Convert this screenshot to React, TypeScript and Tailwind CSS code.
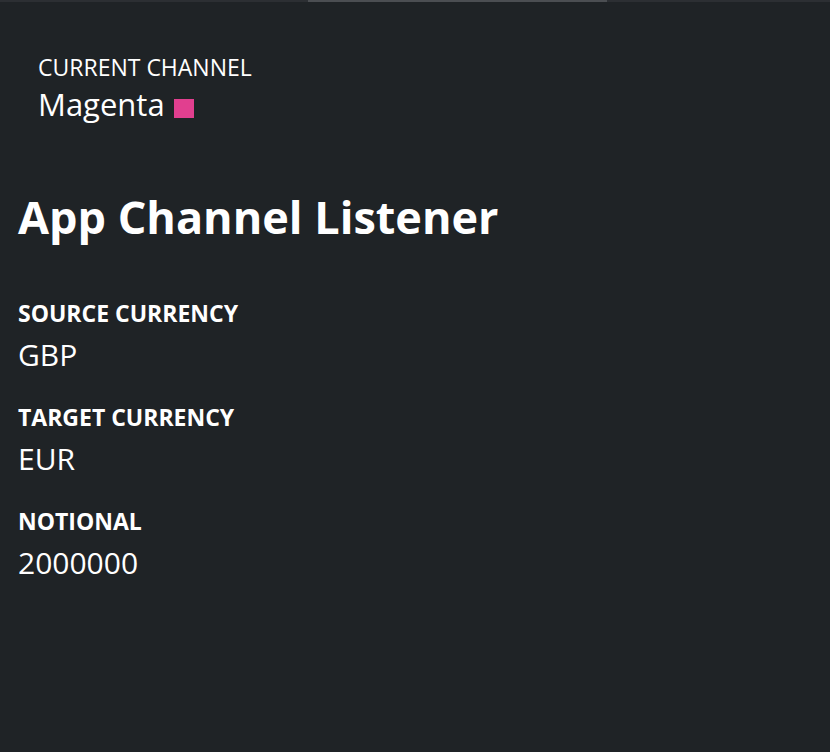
export default function App() {
  const fields = [
    { label: "SOURCE CURRENCY", value: "GBP" },
    { label: "TARGET CURRENCY", value: "EUR" },
    { label: "NOTIONAL", value: "2000000" },
  ];

  return (
    <div className="min-h-[752px] w-full bg-[#1f2326] text-white font-['Open_Sans',sans-serif]">
      {/* top scroll strip */}
      <div className="h-[2px] w-full bg-[#2c2f33]">
        <div className="ml-[308px] h-full w-[299px] bg-[#4b4e52]" />
      </div>

      <div className="pl-[38px] pt-[51px]">
        <div className="text-[23px] leading-[28px]">CURRENT CHANNEL</div>
        <div className="mt-[4px] flex items-start gap-[9px] text-[31px] leading-[38px]">
          <span>Magenta</span>
          <span className="mt-[14px] h-[19px] w-[20px] bg-[#e13f8f]" />
        </div>
      </div>

      <div className="pl-[18px] pt-[68px]">
        <h1 className="text-[45px] font-bold leading-[52px]">App Channel Listener</h1>
        <div className="mt-[56px] flex flex-col gap-[30px]">
          {fields.map((f) => (
            <div key={f.label}>
              <div className="text-[23px] font-bold leading-[28px]">{f.label}</div>
              <div className="mt-[10px] text-[30px] leading-[36px]">{f.value}</div>
            </div>
          ))}
        </div>
      </div>
    </div>
  );
}
